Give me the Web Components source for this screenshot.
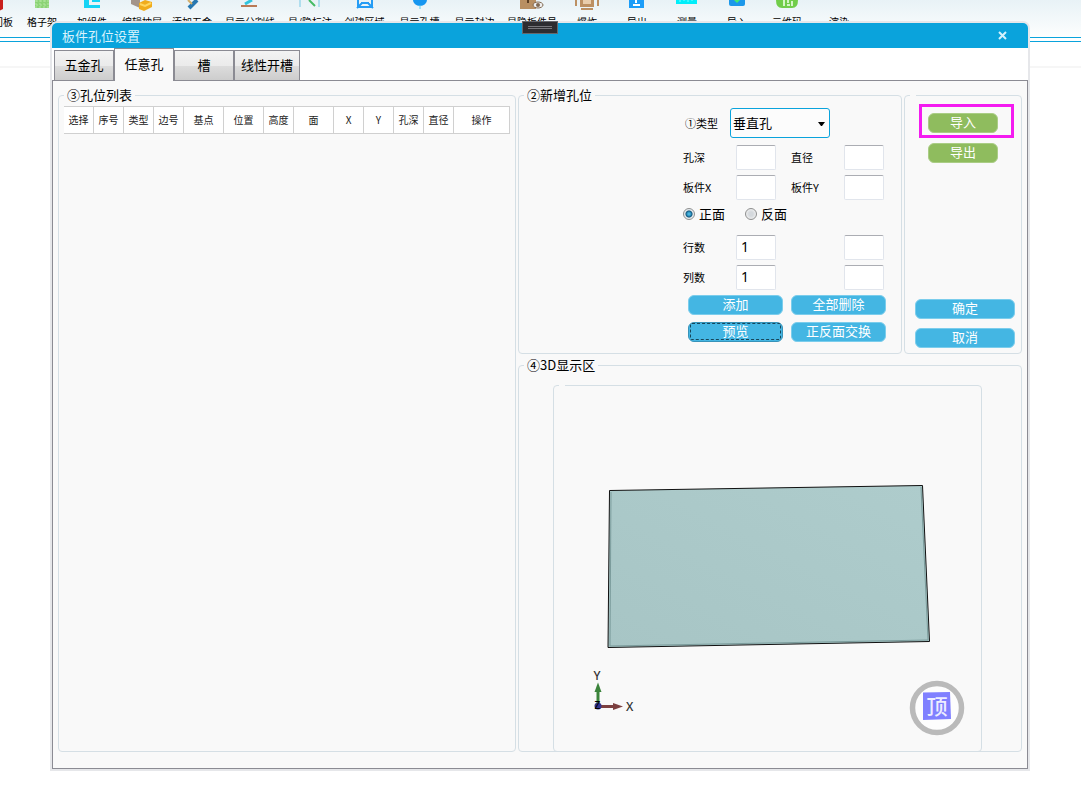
<!DOCTYPE html>
<html lang="zh-CN">
<head>
<meta charset="utf-8">
<title>板件孔位设置</title>
<style>
  html, body { height: 100%; }
  body {
    margin: 0;
    position: relative;
    overflow: hidden;
    background: #fff;
    color: #000;
    font-family: "Noto Sans CJK SC", "Liberation Sans", sans-serif;
    font-size: 13px;
    --accent: #0aa3dc;
    --panel: #f9f9f9;
    --edge: #8b8b93;
    --group: #d5dfe5;
  }
</style>
</head>
<body>
<app-toolbar>
  <tool-item style="--w:28px" label="门板"><svg width="20" height="11"><path d="M0 0H10V9L6 11H0Z" fill="#c9201c"/></svg></tool-item>
  <tool-item label="格子架"><svg width="20" height="11"><path d="M3 0H17V8H3Z" fill="#8bd376"/><path d="M3 1H17M3 4H17M3 7H17M5 0V8M9 0V8M13 0V8" stroke="#b3e6a2" stroke-dasharray="2 2"/></svg></tool-item>
  <tool-item label="加组件"><svg width="20" height="11"><path d="M2 0H7V5H18V8H2Z" fill="#15d3f5"/><path d="M10 0H18V2H10Z" fill="#15d3f5"/></svg></tool-item>
  <tool-item label="编辑抽屉"><svg width="24" height="11"><path d="M1 0H10V8L1 4Z" fill="#a3948a"/><path d="M9 3L15 0L22 2V7L14 11L9 9Z" fill="#f0ac1c"/><path d="M10 4L15 6L21 3" fill="none" stroke="#ffd65e" stroke-width="2"/></svg></tool-item>
  <tool-item label="添加五金"><svg width="20" height="11"><path d="M15 0L7 8" stroke="#2878b0" stroke-width="4"/><path d="M6 0L10 4" stroke="#d4ae68" stroke-width="2"/></svg></tool-item>
  <tool-item style="--w:66px" label="显示分割线"><svg width="20" height="11"><path d="M12 0L5 4" stroke="#31c4dd" stroke-width="3"/><path d="M1 6H17" stroke="#b97a56" stroke-width="2"/></svg></tool-item>
  <tool-item style="--w:54px" label="显/隐标注"><svg width="24" height="11"><path d="M2 0V7M21 0V7" stroke="#76c9e6"/><path d="M11 0L17 6" stroke="#45bb62" stroke-width="2"/></svg></tool-item>
  <tool-item style="--w:55px" label="创建区域"><svg width="20" height="11"><path d="M3 0V7H17V0M6 3H14M2 8L7 3M18 8L13 3" fill="none" stroke="#249cf5" stroke-width="2"/></svg></tool-item>
  <tool-item style="--w:55px" label="显示孔槽"><svg width="20" height="11"><path d="M3 0A7 6 0 0 0 17 0Z" fill="#1696f0"/><path d="M10 5V9" stroke="#58ccee"/></svg></tool-item>
  <tool-item style="--w:55px" label="显示封边"></tool-item>
  <tool-item style="--w:60px" label="显隐板件号"><svg width="26" height="11"><path d="M1 0H17V9H1Z" fill="#b88f62"/><path d="M9 0V3" stroke="#5a3d22" stroke-width="2"/><ellipse cx="19" cy="5" rx="5" ry="3" fill="#eee" stroke="#826a52"/><circle cx="19" cy="5" r="2" fill="#826a52"/></svg></tool-item>
  <tool-item label="爆炸"><svg width="26" height="11"><path d="M6 0H20V7H6Z" fill="#bc9063"/><path d="M9 0H17V4H9Z" fill="#e9cdac"/><path d="M2 0V6M24 0V6M7 9H19" stroke="#bc9063" stroke-width="2"/></svg></tool-item>
  <tool-item label="导出"><svg width="20" height="11"><path d="M2 0H17V8H2Z" fill="#1c9df8"/><path d="M9 0V3M6 5H13" stroke="#fff" stroke-width="2"/></svg></tool-item>
  <tool-item label="测量"><svg width="22" height="11"><path d="M0 0H21V4H0Z" fill="#00eefa"/><path d="M4 0V2M8 0V1M12 0V2M16 0V1" stroke="#79ffff"/></svg></tool-item>
  <tool-item label="导入"><svg width="20" height="11"><path d="M2 0H18V4Q18 6 16 6H4Q2 6 2 4Z" fill="#1c98ea"/><path d="M7 0L10 3L13 0Z" fill="#42ea72"/></svg></tool-item>
  <tool-item label="二维码"><svg width="24" height="11"><path d="M1 0H23Q23 8 17 8H7Q1 8 1 0Z" fill="#71cd4a"/><path d="M9 0V6M13 0V3M17 1V6M12 5H15" stroke="#d4f5c6" stroke-width="2"/></svg></tool-item>
  <tool-item style="--w:54px" label="渲染"></tool-item>
</app-toolbar>

<hole-dialog heading="板件孔位设置">
  <tab-strip slot="tabs"></tab-strip>
  <group-box class="list" legend="③孔位列表"><hole-table></hole-table></group-box>
  <group-box class="form" legend="②新增孔位"><hole-form></hole-form></group-box>
  <group-box class="actions"><dialog-actions></dialog-actions></group-box>
  <group-box class="view" legend="④3D显示区"><group-box class="scene"><board-scene></board-scene></group-box></group-box>
</hole-dialog>

<script>
const attach = (el, html) => { el.attachShadow({ mode: 'open' }).innerHTML = html; };

customElements.define('app-toolbar', class extends HTMLElement {
  constructor() {
    super();
    attach(this, `<style>
      :host { display: block; }
      .bar { display: flex; height: 37px; margin-left: -11px; background: linear-gradient(#e8f2f6, #fdfefe); }
      .rule { height: 3px; border-top: 1px solid var(--accent); border-bottom: 1px solid var(--accent); }
      .ruler { height: 24px; border-bottom: 2px solid #f6f6f6; }
    </style><div class="bar"><slot></slot></div><div class="rule"></div><div class="ruler"></div>`);
  }
});

customElements.define('tool-item', class extends HTMLElement {
  constructor() {
    super();
    attach(this, `<style>
      :host { display: block; flex: none; width: var(--w, 50px); }
      button { display: flex; flex-direction: column; align-items: center; width: 100%; padding: 0; border: 0; background: none; color: #000; font: inherit; font-size: 10px; line-height: 14px; white-space: nowrap; }
      .icon { display: flex; align-items: flex-start; height: 15px; }
    </style><button type="button"><span class="icon"><slot></slot></span><span>${this.getAttribute('label')}</span></button>`);
  }
});

customElements.define('hole-dialog', class extends HTMLElement {
  constructor() {
    super();
    attach(this, `<style>
      :host { position: absolute; inset: 23px 53px 28px 52px; display: flex; flex-direction: column; background: #fff; border-radius: 5px 5px 0 0; box-shadow: 0 0 0 2px #e6e7ea; }
      header { display: flex; align-items: center; justify-content: space-between; height: 25px; padding: 0 21px 0 10px; background: var(--accent); border-radius: 5px 5px 0 0; color: #d9f3fd; }
      h1 { margin: 0; font-size: 13px; font-weight: 400; line-height: 25px; }
      header button { display: flex; padding: 0; border: 0; background: none; }
      .grip { position: absolute; top: -2px; left: 50%; margin-left: -18px; box-sizing: border-box; width: 36px; height: 13px; padding: 4px 5px; border: 1px solid #66676b; background: #2d2d30; }
      .grip i { display: block; height: 1px; border: solid #77777b; border-width: 1px 0; }
      .body { flex: 1; min-height: 0; display: grid; grid-template: auto minmax(0, 1fr) / minmax(0, 458fr) minmax(0, 384fr) 118px; gap: 3px 2px; padding: 6px 5px 16px; border: 1px solid var(--edge); background: var(--panel); }
      ::slotted(.list) { grid-area: 1 / 1 / 3 / 2; }
      ::slotted(.form) { grid-area: 1 / 2; }
      ::slotted(.actions) { grid-area: 1 / 3; }
      ::slotted(.view) { grid-area: 2 / 2 / 3 / 4; }
    </style>
    <header><h1>${this.getAttribute('heading')}</h1>
      <button type="button" aria-label="关闭"><svg width="9" height="9"><path d="M1 1L8 8M8 1L1 8" stroke="#d4f1fc" stroke-width="2"/></svg></button></header>
    <div class="grip"><i></i></div>
    <slot name="tabs"></slot>
    <div class="body"><slot></slot></div>`);
  }
});

customElements.define('tab-strip', class extends HTMLElement {
  constructor() {
    super();
    attach(this, `<style>
      :host { display: flex; align-items: flex-end; height: 33px; padding-left: 2px; margin-bottom: -1px; position: relative; }
      button { box-sizing: border-box; height: 31px; min-width: 60px; padding: 0 6px 2px; border: 1px solid var(--edge); background: linear-gradient(#f3f3f3, #ebebeb 50%, #dddddd 50%, #cdcdcd); color: #000; font: inherit; line-height: 20px; }
      button.on { height: 33px; border-bottom: 0; background: var(--panel); }
    </style>
    <button type="button">五金孔</button><button type="button" class="on">任意孔</button><button type="button">槽</button><button type="button">线性开槽</button>`);
  }
});

customElements.define('group-box', class extends HTMLElement {
  constructor() {
    super();
    attach(this, `<style>
      :host { display: grid; min-width: 0; min-height: 0; }
      :host(.scene) { flex: 1; margin: 3px 39px -1px 34px; }
      fieldset { display: flex; min-width: 0; min-height: 0; margin: 0; padding: 0; border: 1px solid var(--group); border-radius: 4px; }
      legend { box-sizing: border-box; height: 17px; margin-left: 5px; padding: 0 3px; line-height: 15px; }
    </style><fieldset><legend>${this.getAttribute('legend') || ''}</legend><slot></slot></fieldset>`);
  }
});

customElements.define('hole-table', class extends HTMLElement {
  constructor() {
    super();
    const cols = [['选择', 30], ['序号', 30], ['类型', 30], ['边号', 30], ['基点', 40], ['位置', 40], ['高度', 30], ['面', 40], ['X', 30], ['Y', 30], ['孔深', 30], ['直径', 30], ['操作', 56]];
    attach(this, `<style>
      :host { display: block; flex: 1; margin: 2px 5px; }
      table { width: 100%; table-layout: fixed; border-collapse: separate; border-spacing: 0; border: solid #d0d0d0; border-width: 1px 0; background: #fff; }
      th { height: 26px; padding: 0; border-right: 1px solid #d0d0d0; font-size: 10px; line-height: 16px; font-weight: 400; color: #222; }
    </style>
    <table><colgroup>${cols.map(c => `<col style="width:${c[1]}px">`).join('')}</colgroup>
    <thead><tr>${cols.map(c => `<th scope="col">${c[0]}</th>`).join('')}</tr></thead></table>`);
  }
});

customElements.define('ui-button', class extends HTMLElement {
  constructor() {
    super();
    attach(this, `<style>
      :host { display: block; --face: #44b6e3; --rim: #7bcdec; }
      :host([tone="green"]) { --face: #8fbc5e; --rim: #aacd85; }
      button { position: relative; display: block; box-sizing: border-box; width: 100%; height: 20px; padding: 0 0 2px; border: 1px solid var(--rim); border-radius: 6px; background: var(--face); color: #fff; font: inherit; line-height: 16px; }
      :host([current]) button { border-color: #3793b9; }
      :host([current]) button::after { content: ""; position: absolute; inset: 0 1px 1px; border: 1px dashed #17465a; border-radius: 2px; }
    </style><button type="button"><slot></slot></button>`);
  }
});

customElements.define('hole-form', class extends HTMLElement {
  constructor() {
    super();
    attach(this, `<style>
      :host { display: block; width: 203px; margin: 4px 15px 11px auto; }
      .type { display: flex; align-items: center; height: 30px; padding-left: 2px; margin-bottom: 7px; }
      .type label { width: 45px; }
      label { font-size: 11px; line-height: 16px; }
      .pick { position: relative; }
      select { appearance: none; display: block; box-sizing: border-box; width: 100px; height: 30px; margin: 0; padding: 0 2px 2px; border: 1px solid var(--accent); border-radius: 3px; background: #fcfcfc; color: #000; font: inherit; }
      .pick svg { position: absolute; right: 5px; top: 14px; pointer-events: none; }
      .grid { display: grid; grid-template-columns: 53px 55px 53px 40px; row-gap: 5px; align-items: center; }
      .grid label { padding-bottom: 2px; }
      .grid input { box-sizing: border-box; width: 40px; height: 25px; margin: 0; padding: 0 4px 2px; border: 1px solid #e1e5ec; border-top-color: #abadb3; border-radius: 2px; background: #fff; color: #000; font: 14px "Noto Sans", sans-serif; }
      .sides { display: flex; gap: 20px; height: 18px; margin: 5px 0 12px; }
      .sides label { display: flex; align-items: center; gap: 4px; font-size: 13px; line-height: 18px; }
      .sides input { appearance: none; box-sizing: border-box; width: 12px; height: 12px; margin: 0; border: 1px solid #8e8f8f; border-radius: 50%; background: radial-gradient(#d5d9dd 30%, #f0f0f0 75%); }
      .sides input:checked { background: radial-gradient(circle at 50% 50%, #48b5e0 0 1px, #12608a 3px, #0d4060 3px, #e5ecf0 4px); }
      .buttons { display: grid; grid-template-columns: 95px 95px; gap: 7px 8px; justify-content: end; margin-top: 5px; }
    </style>
    <div class="type"><label for="kind">①类型</label><span class="pick"><select id="kind"><option>垂直孔</option></select><svg width="7" height="4"><path d="M0 0H7L4 4H3Z"/></svg></span></div>
    <div class="grid">
      <label for="depth">孔深</label><input id="depth" type="text"><label for="dia">直径</label><input id="dia" type="text">
      <label for="px">板件X</label><input id="px" type="text"><label for="py">板件Y</label><input id="py" type="text">
    </div>
    <div class="sides"><label><input type="radio" name="side" checked>正面</label><label><input type="radio" name="side">反面</label></div>
    <div class="grid">
      <label for="rows">行数</label><input id="rows" type="text" value="1"><span></span><input type="text" aria-label="行距">
      <label for="cols">列数</label><input id="cols" type="text" value="1"><span></span><input type="text" aria-label="列距">
    </div>
    <div class="buttons"><ui-button>添加</ui-button><ui-button>全部删除</ui-button><ui-button current>预览</ui-button><ui-button>正反面交换</ui-button></div>`);
  }
});

customElements.define('dialog-actions', class extends HTMLElement {
  constructor() {
    super();
    attach(this, `<style>
      :host { flex: 1; display: flex; flex-direction: column; justify-content: space-between; padding: 9px 6px 5px 10px; }
      .io { display: grid; gap: 10px; width: 70px; margin-left: 13px; }
      .marked { position: relative; }
      .marked::after { content: ""; position: absolute; inset: -9px -16px -5px -9px; border: 3px solid #f41bf0; pointer-events: none; }
      .end { display: grid; gap: 9px; }
    </style>
    <div class="io"><div class="marked"><ui-button tone="green">导入</ui-button></div><ui-button tone="green">导出</ui-button></div>
    <div class="end"><ui-button>确定</ui-button><ui-button>取消</ui-button></div>`);
  }
});

customElements.define('board-scene', class extends HTMLElement {
  constructor() {
    super();
    attach(this, `<style>
      :host { display: block; flex: 1; min-width: 0; min-height: 0; }
      svg { display: block; width: 100%; height: 100%; }
      text { font-family: "Noto Sans", "Noto Sans CJK SC", sans-serif; font-size: 12px; font-weight: 500; }
      .cube { font-size: 21px; }
    </style>
    <svg viewBox="554 394 427 357">
      <defs><linearGradient id="face" x1="0" y1="1" x2="1" y2="0"><stop offset="0" stop-color="#a7c5c5"/><stop offset="1" stop-color="#aecccc"/></linearGradient></defs>
      <path d="M609.5 490.5L922.5 485.5L929.5 641.5L608 647.5Z" fill="url(#face)" stroke="#111" stroke-width="1"/>
      <path d="M611 492L610 646L928 640L921 487" fill="none" stroke="#7b9c9c" stroke-width="1"/>
      <path d="M598 704V690" stroke="#3b843b" stroke-width="3"/><path d="M594.5 692L598 682.5L601.5 692Z" fill="#3b843b"/>
      <path d="M600 706.5H615" stroke="#7c4040" stroke-width="3"/><path d="M613 703L623 706.5L613 710Z" fill="#7c4040"/>
      <circle cx="598" cy="706" r="3.5" fill="#34348c"/>
      <text x="593.5" y="680" fill="#333">Y</text><text x="626" y="711" fill="#333">X</text><text x="594.5" y="709" style="font-size:10px">Z</text>
      <circle cx="937" cy="708" r="24.5" fill="#fdfdfd" stroke="#bababa" stroke-width="5.5"/>
      <path d="M923 692.5L950 692L951 719L923 720Z" fill="#8080ff"/>
      <text class="cube" x="926.5" y="714" fill="#eeeeff">顶</text>
    </svg>`);
  }
});
</script>
</body>
</html>
